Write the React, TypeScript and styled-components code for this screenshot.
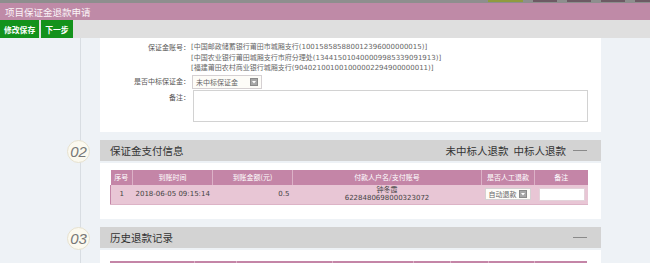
import React from 'react';
import styled, { createGlobalStyle } from 'styled-components';

const GlobalStyle = createGlobalStyle`
  html, body {
    margin: 0;
    padding: 0;
    overflow: hidden;
    background: #eef2f6;
  }
  body {
    font-family: "DejaVu Sans", "Noto Sans CJK SC", sans-serif;
  }
  * {
    box-sizing: border-box;
  }
`;

const cjk = `"Noto Sans CJK SC", sans-serif`;

const TopStrip = styled.div`
  display: flex;
  gap: 10px;
  height: 3px;
  padding-left: 488px;
  background: #8e8e8e;
  overflow: hidden;
`;

const StripTab = styled.span<{ $w: number; $c: string }>`
  flex: 0 0 ${(p) => p.$w}px;
  height: 2px;
  background: ${(p) => p.$c};
`;

const TitleBar = styled.div`
  height: 17px;
  padding-left: 5px;
  display: flex;
  align-items: center;
  background: #bf8aa7;
  color: #fbf4f8;
  font-family: ${cjk};
  font-size: 9.5px;
`;

const Toolbar = styled.div`
  height: 18px;
  display: flex;
  gap: 2px;
  background: #dfdfdf;
`;

const ToolButton = styled.button`
  height: 18px;
  padding: 0 4px;
  border: 0;
  background: #13921b;
  color: #fff;
  font-family: ${cjk};
  font-weight: bold;
  font-size: 7.8px;
  cursor: pointer;
`;

const Content = styled.div`
  display: flex;
  flex-direction: column;
  gap: 8px;
  background: linear-gradient(#d8dde2, #d8dde2) no-repeat 80px 0 / 1px 100%;
`;

const Section = styled.section`
  display: grid;
  grid-template-columns: 100px 501px;
`;

const Marker = styled.div`
  grid-column: 1;
  align-self: center;
  width: 23px;
  height: 23px;
  margin-left: 67px;
  border-radius: 50%;
  border: 1px solid #e6e1cf;
  background: #fbf9ef;
  color: #777;
  font-family: "Liberation Sans", sans-serif;
  font-style: italic;
  font-size: 15px;
  display: flex;
  align-items: center;
  justify-content: center;
`;

const SectionHeader = styled.div`
  grid-column: 2;
  height: 21px;
  padding: 0 14px 0 10px;
  display: flex;
  align-items: center;
  justify-content: space-between;
  background: #d3d3d3;
  color: #333;
  font-family: ${cjk};
  font-size: 10.5px;
`;

const HeaderActions = styled.div`
  display: flex;
  align-items: center;
  gap: 5px;
`;

const Collapse = styled.span`
  width: 14px;
  height: 1px;
  margin-left: 2px;
  background: #8a8a8a;
`;

const Panel = styled.div<{ $pt: number }>`
  grid-column: 2;
  background: #fff;
  padding: ${(p) => p.$pt}px 14px 14px 10px;
`;

const FormGrid = styled.div`
  grid-column: 2;
  background: #fff;
  display: grid;
  grid-template-columns: 90px 1fr;
  column-gap: 1px;
  row-gap: 1px;
  padding: 4px 13px 10px 0;
  font-size: 7px;
  color: #666;
`;

const Label = styled.div<{ $align?: string; $pt?: number }>`
  align-self: ${(p) => p.$align || 'start'};
  padding-top: ${(p) => p.$pt || 0}px;
  text-align: right;
  line-height: 10.5px;
  font-family: ${cjk};
  color: #555;
`;

const Accounts = styled.div`
  line-height: 10.5px;
  white-space: nowrap;
`;

const SelectBox = styled.div<{ $w: number; $h: number; $ml: number }>`
  width: ${(p) => p.$w}px;
  height: ${(p) => p.$h}px;
  margin-left: ${(p) => p.$ml}px;
  padding: 0 3px 0 3px;
  display: flex;
  align-items: center;
  justify-content: space-between;
  border: 1px solid #d5d0d2;
  background: #fdfcf8;
  color: #666;
  font-family: ${cjk};
  font-size: 7px;
  white-space: nowrap;
`;

const Remark = styled.textarea`
  width: 395px;
  height: 32px;
  margin: 0 0 0 2px;
  border: 1px solid #d2d2d2;
  resize: none;
  background: #fff;
`;

const Table = styled.table`
  width: 477px;
  table-layout: fixed;
  border-collapse: collapse;
  font-size: 7px;
`;

const Col = styled.col<{ $w: number }>`
  width: ${(p) => p.$w}px;
`;

const Th = styled.th`
  height: 15px;
  padding: 0;
  background: #c485a7;
  color: #fff;
  font-family: ${cjk};
  font-weight: normal;
  text-align: center;
  white-space: nowrap;
  overflow: hidden;
  border-right: 1px solid #dcb1c7;
  &:last-child {
    border-right: 0;
  }
`;

const Td = styled.td<{ $align?: string; $pad?: number }>`
  height: 20px;
  padding: 0 ${(p) => p.$pad || 0}px;
  background: #e8c6d5;
  color: #444;
  text-align: ${(p) => p.$align || 'center'};
  line-height: 9px;
  white-space: nowrap;
  border-bottom: 1px solid #dcb3c6;
  &:first-child {
    border-left: 1px solid #c485a7;
  }
`;

const PayerName = styled.div`
  font-family: ${cjk};
`;

const CellInput = styled.div`
  width: 46px;
  height: 13px;
  margin-left: 4px;
  background: #fff;
  border: 1px solid #e3d3da;
`;

const Arrow = () => (
  <svg width="8" height="8" viewBox="0 0 8 8">
    <rect x="0.5" y="0.5" width="7" height="7" fill="#a7a7a7" stroke="#8a8a8a" />
    <path d="M2 3 L6 3 L4 5.5 Z" fill="#fff" />
  </svg>
);

const accounts = [
  '[中国邮政储蓄银行莆田市城厢支行(100158585880012396000000015)]',
  '[中国农业银行莆田城厢支行市府分理处(134415010400009985339091913)]',
  '[福建莆田农村商业银行城厢支行(904021001001000002294900000011)]',
];

const historyCols = [
  { w: 84, t: '到账时间' },
  { w: 42, t: '到账金额' },
  { w: 96, t: '付款人户名/支付账号' },
  { w: 81, t: '收款账号' },
  { w: 37, t: '退款金额' },
  { w: 38, t: '退款时间' },
  { w: 46, t: '退款状态' },
  { w: 53, t: '备注' },
];

const App: React.FC = () => (
  <>
    <GlobalStyle />
    <TopStrip>
      <StripTab $w={35} $c="#8f9b3e" />
      <StripTab $w={24} $c="#6d5a64" />
      <StripTab $w={24} $c="#6d5a64" />
      <StripTab $w={24} $c="#6d5a64" />
      <StripTab $w={24} $c="#6d5a64" />
    </TopStrip>
    <TitleBar>项目保证金退款申请</TitleBar>
    <Toolbar>
      <ToolButton>修改保存</ToolButton>
      <ToolButton>下一步</ToolButton>
    </Toolbar>
    <Content>
      <Section>
        <FormGrid>
          <Label>保证金账号：</Label>
          <Accounts>
            {accounts.map((a) => (
              <div key={a}>{a}</div>
            ))}
          </Accounts>
          <Label $align="center">是否中标保证金：</Label>
          <SelectBox $w={70} $h={14} $ml={1}>
            未中标保证金
            <Arrow />
          </SelectBox>
          <Label $pt={2}>备注：</Label>
          <Remark readOnly />
        </FormGrid>
      </Section>

      <Section>
        <Marker>02</Marker>
        <SectionHeader>
          保证金支付信息
          <HeaderActions>
            <span>未中标人退款</span>
            <span>中标人退款</span>
            <Collapse />
          </HeaderActions>
        </SectionHeader>
        <Panel $pt={7}>
          <Table>
            <colgroup>
              <Col $w={22} />
              <Col $w={80} />
              <Col $w={80} />
              <Col $w={189} />
              <Col $w={53} />
              <Col $w={53} />
            </colgroup>
            <thead>
              <tr>
                <Th>序号</Th>
                <Th>到账时间</Th>
                <Th>到账金额(元)</Th>
                <Th>付款人户名/支付账号</Th>
                <Th>是否人工退款</Th>
                <Th>备注</Th>
              </tr>
            </thead>
            <tbody>
              <tr>
                <Td>1</Td>
                <Td $align="left" $pad={3}>2018-06-05 09:15:14</Td>
                <Td $align="right" $pad={3}>0.5</Td>
                <Td>
                  <PayerName>钟冬霞</PayerName>
                  <div>6228480698000323072</div>
                </Td>
                <Td $align="left">
                  <SelectBox $w={46} $h={12} $ml={3}>
                    自动退款
                    <Arrow />
                  </SelectBox>
                </Td>
                <Td $align="left">
                  <CellInput />
                </Td>
              </tr>
            </tbody>
          </Table>
        </Panel>
      </Section>

      <Section>
        <Marker>03</Marker>
        <SectionHeader>
          历史退款记录
          <HeaderActions>
            <Collapse />
          </HeaderActions>
        </SectionHeader>
        <Panel $pt={11}>
          <Table>
            <colgroup>
              {historyCols.map((c) => (
                <Col key={c.t} $w={c.w} />
              ))}
            </colgroup>
            <thead>
              <tr>
                {historyCols.map((c) => (
                  <Th key={c.t}>{c.t}</Th>
                ))}
              </tr>
            </thead>
          </Table>
        </Panel>
      </Section>
    </Content>
  </>
);

export default App;
